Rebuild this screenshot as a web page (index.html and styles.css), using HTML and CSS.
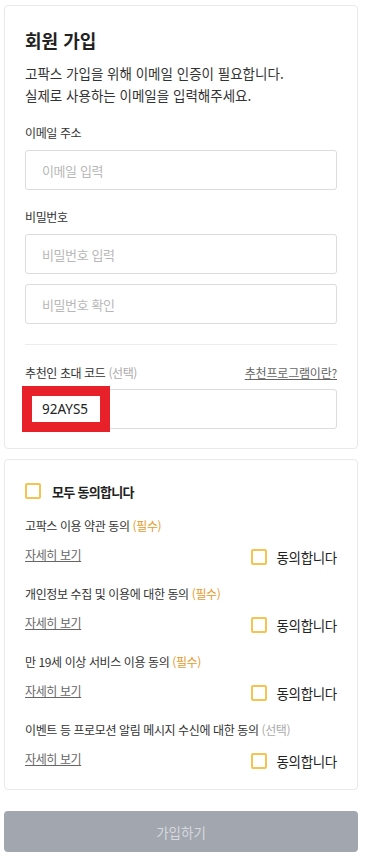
FILE: index.html
```
<!DOCTYPE html>
<html lang="ko">
<head>
<meta charset="utf-8">
<link rel="stylesheet" href="styles.css">
</head>
<body>
<main class="page">
  <section class="card signup">
    <h1 class="title">회원 가입</h1>
    <p class="desc">고팍스 가입을 위해 이메일 인증이 필요합니다.<br>실제로 사용하는 이메일을 입력해주세요.</p>

    <label class="label first">이메일 주소</label>
    <div class="input"><span class="ph">이메일 입력</span></div>

    <label class="label">비밀번호</label>
    <div class="input"><span class="ph">비밀번호 입력</span></div>
    <div class="input second"><span class="ph">비밀번호 확인</span></div>

    <hr class="divider">

    <div class="label-row">
      <span class="label-inline">추천인 초대 코드 <span class="opt">(선택)</span></span>
      <a class="help">추천프로그램이란?</a>
    </div>
    <div class="input code-input">
      <div class="highlight"><span class="code">92AYS5</span></div>
    </div>
  </section>

  <section class="card terms">
    <div class="all">
      <span class="box"></span>
      <span class="all-text">모두 동의합니다</span>
    </div>

    <div class="term">
      <div class="term-title">고팍스 이용 약관 동의 <span class="req">(필수)</span></div>
      <div class="term-row">
        <a class="more">자세히 보기</a>
        <span class="agree"><span class="box"></span>동의합니다</span>
      </div>
    </div>

    <div class="term">
      <div class="term-title">개인정보 수집 및 이용에 대한 동의 <span class="req">(필수)</span></div>
      <div class="term-row">
        <a class="more">자세히 보기</a>
        <span class="agree"><span class="box"></span>동의합니다</span>
      </div>
    </div>

    <div class="term">
      <div class="term-title">만 19세 이상 서비스 이용 동의 <span class="req">(필수)</span></div>
      <div class="term-row">
        <a class="more">자세히 보기</a>
        <span class="agree"><span class="box"></span>동의합니다</span>
      </div>
    </div>

    <div class="term">
      <div class="term-title">이벤트 등 프로모션 알림 메시지 수신에 대한 동의 <span class="opt">(선택)</span></div>
      <div class="term-row">
        <a class="more">자세히 보기</a>
        <span class="agree"><span class="box"></span>동의합니다</span>
      </div>
    </div>
  </section>

  <button class="submit">가입하기</button>
</main>
</body>
</html>
```

FILE: styles.css
```
* { box-sizing: border-box; }
html, body { margin: 0; padding: 0; background: #fff; }
body {
  font-family: "Noto Sans CJK KR", "Noto Sans", sans-serif;
  color: #333;
}
.page {
  width: 354px;
  margin: 5px 0 0 4px;
  display: flex;
  flex-direction: column;
}
.card {
  border: 1px solid #e9e9e9;
  border-radius: 4px;
  background: #fff;
  display: flex;
  flex-direction: column;
}
.signup { padding: 22px 20px 19px; }
.title {
  margin: 0;
  font-size: 18px;
  line-height: 24px;
  font-weight: 700;
  color: #222;
}
.desc {
  margin: 10px 0 0;
  font-size: 13.5px;
  line-height: 22px;
  color: #333;
}
.label {
  display: block;
  margin-top: 18px;
  font-size: 12px;
  letter-spacing: -0.4px;
  line-height: 18px;
  color: #333;
}
.input {
  position: relative;
  margin-top: 8px;
  height: 40px;
  border: 1px solid #dcdcdc;
  border-radius: 3px;
  padding: 0 16px;
  display: flex;
  align-items: center;
}
.input.second { margin-top: 10px; }
.ph { font-size: 13px; letter-spacing: -0.4px; color: #b8b8b8; }
.divider {
  margin: 20px 0 0;
  border: 0;
  border-top: 1px solid #ececec;
  height: 0;
}
.label-row {
  margin-top: 19px;
  display: flex;
  justify-content: space-between;
  align-items: center;
  line-height: 18px;
}
.label-inline { font-size: 12px; letter-spacing: -0.4px; color: #333; }
.opt { color: #aaa; }
.help {
  font-size: 12px;
  letter-spacing: -0.2px;
  color: #666;
  text-decoration: underline;
}
.code-input { margin-top: 7px; }
.highlight {
  position: absolute;
  left: -4px;
  top: -4px;
  width: 88px;
  height: 46px;
  border: 10px solid #e8202a;
  background: #fff;
  display: flex;
  align-items: center;
  padding-left: 10px;
}
.code { font-size: 13.5px; color: #222; font-family: "Noto Sans", "Noto Sans CJK KR", sans-serif; }

.terms {
  margin-top: 10px;
  padding: 21px 20px 15px;
}
.all {
  display: flex;
  align-items: center;
  height: 20px;
}
.all-text {
  margin-left: 11px;
  font-size: 13px;
  letter-spacing: -0.7px;
  font-weight: 700;
  color: #222;
}
.box {
  width: 16px;
  height: 16px;
  border: 2px solid #f4c453;
  border-radius: 2px;
  flex: none;
}
.term { margin-top: 16px; }
.term + .term { margin-top: 15px; }
.term-title {
  font-size: 12px;
  letter-spacing: -0.4px;
  line-height: 18px;
  color: #333;
}
.req { color: #e69b2c; }
.term-row {
  margin-top: 11px;
  height: 24px;
  display: flex;
  justify-content: space-between;
  align-items: center;
}
.more {
  align-self: flex-start;
  font-size: 12px;
  letter-spacing: -0.4px;
  line-height: 18px;
  color: #666;
  text-decoration: underline;
}
.agree {
  display: flex;
  align-items: center;
  gap: 9px;
  font-size: 13.5px;
  letter-spacing: -0.3px;
  color: #222;
  margin-top: -3px;
}
.submit {
  margin-top: 21px;
  height: 41px;
  border: 0;
  border-radius: 4px;
  background: #a1a6af;
  color: #d6d9de;
  font-family: "Noto Sans CJK KR", "Noto Sans", sans-serif;
  font-size: 13.5px;
}
```
